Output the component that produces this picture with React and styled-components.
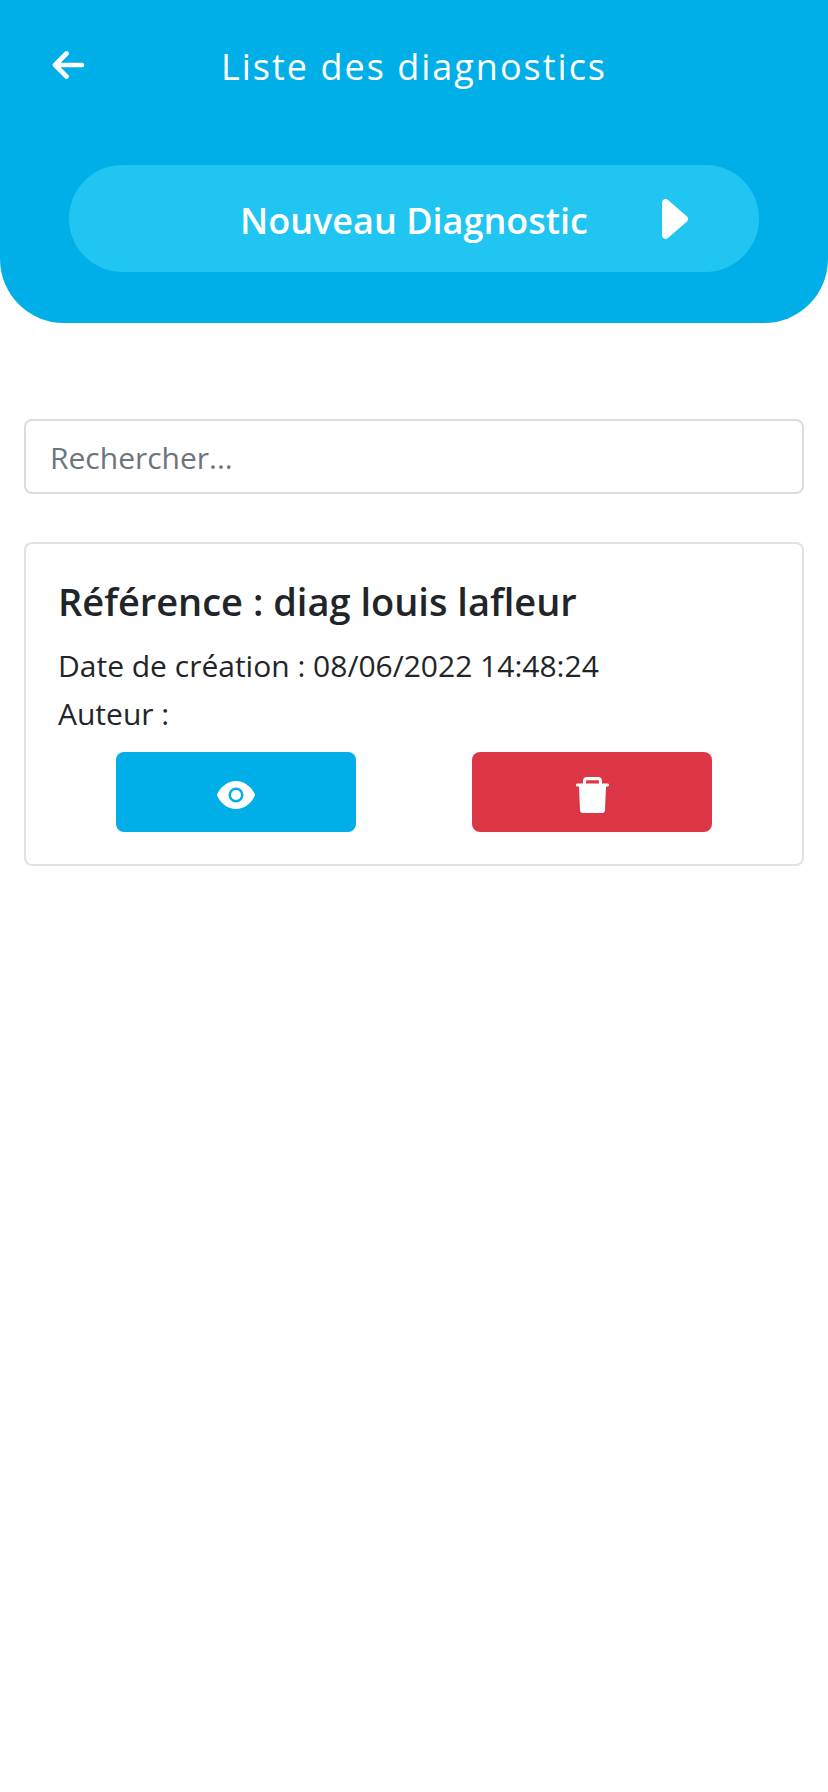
import React from "react";
import styled, { createGlobalStyle } from "styled-components";

const GlobalStyle = createGlobalStyle`
  *, *::before, *::after { box-sizing: border-box; }
  body {
    margin: 0;
    background: #fff;
    color: #212529;
    font-family: "Segoe UI", "Open Sans", "Noto Sans", sans-serif;
    font-size: 30px;
    line-height: 48px;
  }
  button, input { font: inherit; }
`;

const Header = styled.header`
  padding-bottom: 51px;
  background: #00aee8;
  border-radius: 0 0 64px 64px;
  color: #fff;
`;

const TopBar = styled.div`
  display: grid;
  grid-template-columns: 72px 1fr 72px;
  align-items: center;
  padding: 39px 32px 74px;
`;

const BackButton = styled.button`
  display: flex;
  justify-content: center;
  padding: 0;
  border: 0;
  background: none;
  color: inherit;
  cursor: pointer;
`;

const PageTitle = styled.h1`
  margin: 0;
  padding-top: 4px;
  font-size: 36px;
  font-weight: 400;
  line-height: 48px;
  letter-spacing: 2px;
  text-align: center;
`;

const NewButton = styled.button`
  display: grid;
  grid-template-columns: 1fr auto 1fr;
  align-items: center;
  width: calc(100% / 6 * 5);
  height: 107px;
  margin: 0 auto;
  padding: 0 70px;
  border: 0;
  border-radius: 54px;
  background: #20c5f2;
  color: inherit;
  font-size: 36px;
  font-weight: 600;
  cursor: pointer;
`;

const NewLabel = styled.span`
  grid-column: 2;
  padding-top: 4px;
`;

const PlayIcon = styled.svg`
  justify-self: end;
`;

const Main = styled.main`
  display: flex;
  flex-direction: column;
  gap: 48px;
  padding: 96px 24px 24px;
`;

const SearchInput = styled.input`
  width: 100%;
  height: 75px;
  padding: 2px 24px 0;
  border: 2px solid #d8dde2;
  border-radius: 8px;
  background: #fff;
  color: inherit;
  &::placeholder { color: #6c757d; opacity: 1; }
`;

const Card = styled.article`
  padding: 32px;
  border: 2px solid #e1e1e1;
  border-radius: 8px;
`;

const CardTitle = styled.h2`
  margin: 0 0 16px;
  font-size: 38px;
  font-weight: 600;
  line-height: 50px;
`;

const CardLine = styled.p`
  margin: 0;
`;

const Actions = styled.div`
  display: flex;
  justify-content: space-around;
  margin-top: 14px;
`;

const ActionButton = styled.button`
  display: flex;
  align-items: center;
  justify-content: center;
  width: 240px;
  height: 80px;
  padding: 6px 0 0;
  border: 0;
  border-radius: 8px;
  background: ${({ $danger }) => ($danger ? "#dc3545" : "#00aee8")};
  color: #fff;
  cursor: pointer;
`;

const diagnostics = [
  { reference: "diag louis lafleur", createdAt: "08/06/2022 14:48:24", author: "" },
];

export default function App() {
  return (
    <>
      <GlobalStyle />
      <Header>
        <TopBar>
          <BackButton type="button" aria-label="Retour">
            <svg width="34" height="28" viewBox="0 0 34 28" fill="none" stroke="currentColor" strokeWidth="4.600" strokeLinecap="round" strokeLinejoin="round">
              <path d="M15.500 2.500 4 14l11.500 11.500M5 14h26" />
            </svg>
          </BackButton>
          <PageTitle>Liste des diagnostics</PageTitle>
        </TopBar>
        <NewButton type="button">
          <NewLabel>Nouveau Diagnostic</NewLabel>
          <PlayIcon width="27" height="40" viewBox="0 0 27 40" fill="currentColor" aria-hidden="true">
            <path d="M0 4C0 .500 3.500-1 6 1l19 16.500c1.600 1.400 1.600 3.600 0 5L6 39c-2.500 2-6 .500-6-3Z" />
          </PlayIcon>
        </NewButton>
      </Header>
      <Main>
        <SearchInput type="search" placeholder="Rechercher..." aria-label="Rechercher" />
        {diagnostics.map((item) => (
          <Card key={item.reference}>
            <CardTitle>Référence : {item.reference}</CardTitle>
            <CardLine>Date de création : {item.createdAt}</CardLine>
            <CardLine>Auteur : {item.author}</CardLine>
            <Actions>
              <ActionButton type="button" aria-label="Voir">
                <svg width="38" height="28" viewBox="0 0 38 28" fill="currentColor">
                  <path fillRule="evenodd" d="M19 0C11 0 4 5.500.500 12.500a3 3 0 0 0 0 3C4 22.500 11 28 19 28s15-5.500 18.500-12.500a3 3 0 0 0 0-3C34 5.500 27 0 19 0Zm0 6.500a7.500 7.500 0 1 1 0 15 7.500 7.500 0 0 1 0-15Z" />
                  <circle cx="19" cy="14" r="5" />
                </svg>
              </ActionButton>
              <ActionButton type="button" aria-label="Supprimer" $danger>
                <svg width="33" height="36" viewBox="0 0 33 36" fill="currentColor">
                  <path fillRule="evenodd" d="M7 6.500V4a4 4 0 0 1 4-4h11a4 4 0 0 1 4 4v2.500h5.500a1.500 1.500 0 0 1 0 3.100H30L29 33a3 3 0 0 1-3 3H7a3 3 0 0 1-3-3L3 9.600H1.500a1.500 1.500 0 0 1 0-3.100ZM10 6.500h13V4.300a1 1 0 0 0-1-1H11a1 1 0 0 0-1 1Z" />
                </svg>
              </ActionButton>
            </Actions>
          </Card>
        ))}
      </Main>
    </>
  );
}
